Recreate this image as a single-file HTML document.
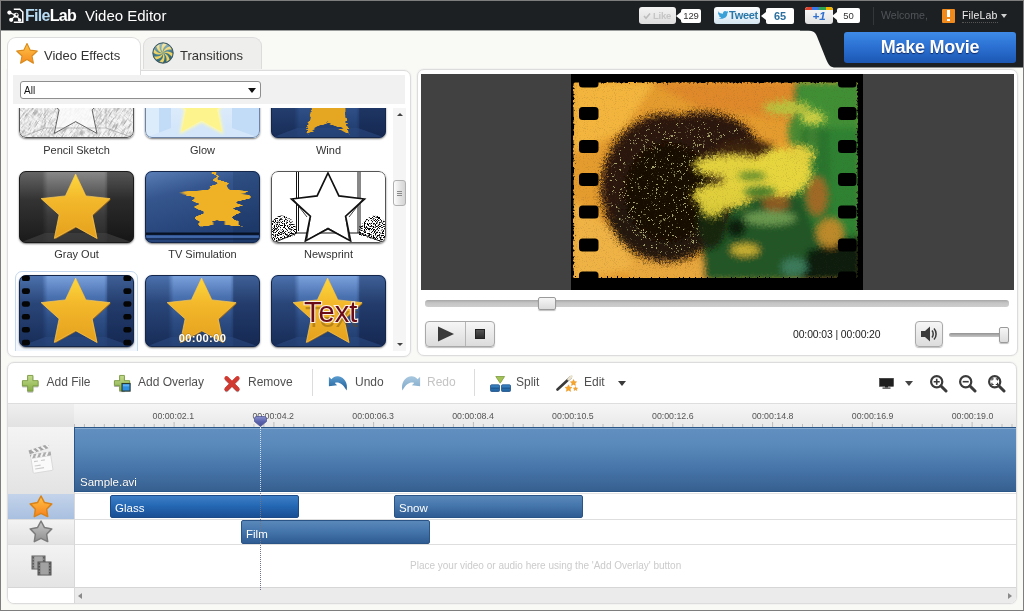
<!DOCTYPE html>
<html lang="en">
<head>
<meta charset="utf-8">
<title>FileLab Video Editor</title>
<style>
*{box-sizing:border-box;margin:0;padding:0}
html,body{width:1024px;height:611px;overflow:hidden}
body{position:relative;background:#f9f9f6;font-family:"Liberation Sans",Arial,sans-serif;font-size:12px;color:#3a3a3a}
.abs{position:absolute}
#root{position:absolute;left:0;top:0;width:1024px;height:611px;will-change:transform}
#frame{position:absolute;left:0;top:0;width:1024px;height:611px;border:1px solid #7e7e7e;z-index:50;pointer-events:none}
/* header */
#hdr{position:absolute;left:0;top:0;width:1024px;height:31px;background:#1d2023;border-bottom:1px solid #9b9c9c}
#hdrx{position:absolute;left:800px;top:30px;width:224px;height:38px}
#logo{position:absolute;left:25px;top:6px;font-size:16px;font-weight:bold;letter-spacing:-0.7px;color:#fff;line-height:19px}
#logo b{color:#b7dbf3}
#ttl{position:absolute;left:85px;top:6px;font-size:15px;color:#fff;line-height:19px}
.soc{position:absolute;top:7px;height:17px;border-radius:3px;font-size:10px;line-height:17px;text-align:center}
.cnt{position:absolute;top:7px;height:17px;background:#fff;border-radius:2px;font-size:10px;line-height:17px;text-align:center;color:#333}
#mk{position:absolute;left:844px;top:32px;width:172px;height:31px;border-radius:3px;background:linear-gradient(#3e8ae6,#2c72d4 45%,#1c57b3);color:#fff;font-weight:bold;font-size:18px;line-height:30px;text-align:center;text-shadow:0 1px 1px rgba(0,0,40,.6);letter-spacing:-0.25px}
/* tabs */
.tab{position:absolute;top:37px;height:36px;border:1px solid #dcdcdc;border-bottom:none;border-radius:9px 9px 0 0;font-size:13px;line-height:36px;color:#333}
#tab1{left:7px;width:134px;background:#fff;height:38px;z-index:3}
#tab2{left:143px;width:119px;background:#eeeeec}
.panel{position:absolute;background:#fff;border:1px solid #dcdcdc;border-radius:7px;box-shadow:0 0 0 1px #f3f3f1}
#fx{left:7px;top:70px;width:404px;height:287px;border-top-left-radius:0}
#fbar{position:absolute;left:13px;top:75px;width:392px;height:29px;background:#f1f1f1}
#sel{position:absolute;left:20px;top:81px;width:241px;height:18px;border:1px solid #8e8e8e;border-radius:3px;background:#fff;font-size:10px;line-height:17px;padding-left:3px;color:#111}
#sel:after{content:"";position:absolute;right:4px;top:6px;border:4px solid transparent;border-top:5px solid #111;border-bottom:none}
#tclip{position:absolute;left:8px;top:108px;width:384px;height:243px;overflow:hidden}
.th{position:absolute;width:115px;height:72px;border-radius:7px;overflow:hidden;box-shadow:0 1px 2px rgba(0,0,0,.55)}
.lbl{position:absolute;width:125px;text-align:center;font-size:11px;line-height:14px;color:#333}
/* video */
#vp{left:417px;top:69px;width:601px;height:287px}
#vbg{position:absolute;left:421px;top:74px;width:593px;height:216px;background:#414141}
#vid{position:absolute;left:571px;top:74px;width:292px;height:216px}
.btn{position:absolute;border:1px solid #a9a9a9;background:linear-gradient(#f6f6f6,#dcdcdc);box-shadow:0 1px 1px rgba(0,0,0,.25)}
/* bottom */
#tl{left:7px;top:362px;width:1010px;height:242px;overflow:hidden}
.tb{position:absolute;top:375px;white-space:nowrap;font-size:12px;line-height:15px;color:#505050}
.sep{position:absolute;top:369px;width:1px;height:27px;background:#dcdcdc}
</style>
</head>
<body>
<div id="root">
<div id="hdr"></div>
<svg id="hdrx" viewBox="0 0 224 38"><path d="M0 0H224V37.6H36C30 37.6 28.5 35 26 29L17 6.5C15 2 13 .6 6 .6H0z" fill="#1d2023"/></svg>
<svg class="abs" style="left:7px;top:8px" width="17" height="16" viewBox="0 0 17 16"><path d="M6.8 1.2h6l3 2.800000000000001v10.3h-9" fill="none" stroke="#fff" stroke-width="1.5"/><path d="M2.2 4.6L9.1 7.2 4 11.7M9.1 7.2l3.6 4.8" stroke="#fff" stroke-width="1.2" fill="none"/><circle cx="2.4" cy="4.6" r="2.1" fill="#fff"/><circle cx="9.1" cy="7.2" r="2.5" fill="#fff"/><circle cx="4.2" cy="11.8" r="2.1" fill="#fff"/><circle cx="12.6" cy="12" r="1.8" fill="#fff"/><circle cx="9.6" cy="6.6" r="1.1" fill="#1d2023"/></svg>
<div id="logo"><b>File</b>Lab</div>
<div id="ttl">Video Editor</div>
<div class="soc" style="left:639px;width:37px;background:linear-gradient(#f3f3f3,#dedede);color:#c6c6c6;font-weight:bold;padding-left:9px;letter-spacing:-.3px;font-size:9.5px">Like</div>
<svg class="abs" style="left:643px;top:12px" width="8" height="8" viewBox="0 0 8 8"><path d="M1 4l2 2.3L7 1.5" stroke="#bdbdbd" stroke-width="1.6" fill="none"/></svg>
<div class="cnt" style="left:681px;width:20px;top:9px;height:14px;line-height:14px;font-size:9.5px;letter-spacing:-.2px">129</div>
<div class="abs" style="left:676px;top:12px;border:4px solid transparent;border-right:5px solid #fff;border-left:none"></div>
<div class="soc" style="left:714px;width:46px;background:linear-gradient(#fdfeff,#d5e6f1);color:#2a77a8;font-weight:bold;padding-left:13px;letter-spacing:-.3px;font-size:11px">Tweet</div>
<svg class="abs" style="left:717px;top:10px" width="12" height="10" viewBox="0 0 12 10"><path d="M1 1.2c1.5 1.8 3 2.4 5 2.5C5.800000000000001 1.5 8 .2 9.600000000000001 1.6l1.6-.5-.8 1.2 1 .1-1.100000000000001.900000000000001C10.5 7 7 10 1 8.400000000000001c1.400000000000001 0 2.400000000000001-.3 3.100000000000001-1C2.800000000000001 7.2 2.100000000000001 6.5 1.800000000000001 5.6h1.100000000000001C1.600000000000001 5 1 4 1 3l1 .3C1 2.6.8 1.900000000000001 1 1.2z" fill="#39a0d8"/></svg>
<div class="cnt" style="left:766px;width:28px;top:8px;height:16px;line-height:16px;color:#2a6f9e;font-weight:bold;font-size:11px">65</div>
<div class="abs" style="left:761px;top:12px;border:4px solid transparent;border-right:5px solid #fff;border-left:none"></div>
<div class="soc" style="left:805px;width:28px;background:linear-gradient(#fafafa,#e2e2e2);color:#2f6fd0;font-weight:bold;font-style:italic;font-size:11.5px;overflow:hidden;padding-top:1px">+1<span class="abs" style="left:0;top:0;width:28px;height:3px;background:linear-gradient(90deg,#d9412e 0 25%,#3b78e7 25% 50%,#2ea44f 50% 75%,#f4b400 75%)"></span></div>
<div class="cnt" style="left:837px;width:23px;top:8px;height:15px;line-height:15px;font-size:9.5px">50</div>
<div class="abs" style="left:832px;top:12px;border:4px solid transparent;border-right:5px solid #fff;border-left:none"></div>
<div class="abs" style="left:873px;top:7px;width:1px;height:18px;background:#33373b"></div>
<div class="abs" style="left:881px;top:9px;font-size:10.6px;line-height:13px;color:#505458">Welcome,</div>
<div class="abs" style="left:942px;top:9px;width:13px;height:14px;background:#f08a1d;border-radius:1px"></div>
<div class="abs" style="left:947px;top:10px;width:3px;height:7px;background:#fff"></div><div class="abs" style="left:947px;top:19px;width:3px;height:2px;background:#fff"></div>
<div class="abs" style="left:962px;top:9px;font-size:10.5px;line-height:13px;color:#ececec;letter-spacing:.15px;border-bottom:1px dotted #555">FileLab</div>
<div class="abs" style="left:1001px;top:14px;border:3.5px solid transparent;border-top:4px solid #d0d0d0;border-bottom:none"></div>
<div id="mk">Make Movie</div>
<div class="tab" id="tab2"><span style="position:absolute;left:36px">Transitions</span></div>
<div class="panel" id="fx"></div>
<div class="tab" id="tab1"><span style="position:absolute;left:36px">Video Effects</span></div>
<svg class="abs" style="left:15px;top:42px;z-index:4" width="24" height="23" viewBox="0 0 24 23"><defs><linearGradient id="sg" x1="0" y1="0" x2="0" y2="1"><stop offset="0" stop-color="#ffc64a"/><stop offset="1" stop-color="#f58a1f"/></linearGradient></defs><path d="M12 1.5l3.100000000000001 6.6 7.2.9-5.3 5 1.400000000000001 7.2L12 17.6l-6.4 3.600000000000001L7 14 1.7 9l7.2-.9z" fill="url(#sg)" stroke="#d98a1c" stroke-width="1.1" stroke-linejoin="round"/></svg>
<svg class="abs" style="left:152px;top:42px;z-index:4" width="22" height="22" viewBox="0 0 22 22"><defs><radialGradient id="tg" cx=".4" cy=".3" r=".8"><stop offset="0" stop-color="#5a9aa8"/><stop offset="1" stop-color="#24596a"/></radialGradient><linearGradient id="tgl" x1="0" y1="0" x2="0" y2="1"><stop offset="0" stop-color="#fff" stop-opacity=".45"/><stop offset=".5" stop-color="#fff" stop-opacity="0"/></linearGradient></defs><circle cx="11" cy="11" r="10.2" fill="url(#tg)" stroke="#3c5560" stroke-width="1"/><path d="M11 11Q15.1 7.8 20.4 11.0A9.4 9.4 0 0 1 19.6 14.8Q16.0 9.7 11 11zM11 11Q16.1 11.6 17.6 17.6A9.4 9.4 0 0 1 14.4 19.8Q15.4 13.7 11 11zM11 11Q14.2 15.1 11.0 20.4A9.4 9.4 0 0 1 7.2 19.6Q12.3 16.0 11 11zM11 11Q10.4 16.1 4.4 17.6A9.4 9.4 0 0 1 2.2 14.4Q8.3 15.4 11 11zM11 11Q6.9 14.2 1.6 11.0A9.4 9.4 0 0 1 2.4 7.2Q6.0 12.3 11 11zM11 11Q5.9 10.4 4.4 4.4A9.4 9.4 0 0 1 7.6 2.2Q6.6 8.3 11 11zM11 11Q7.8 6.9 11.0 1.6A9.4 9.4 0 0 1 14.8 2.4Q9.7 6.0 11 11zM11 11Q11.6 5.9 17.6 4.4A9.4 9.4 0 0 1 19.8 7.6Q13.7 6.6 11 11z" fill="#efd264"/><circle cx="11" cy="11" r="9.6" fill="url(#tgl)"/></svg>
<div id="fbar"></div>
<div id="sel">All</div>
<svg width="0" height="0" style="position:absolute"><defs><linearGradient id="sy" x1="0" y1="0" x2="0" y2="1"><stop offset="0" stop-color="#fcd83e"/><stop offset=".4" stop-color="#f3b82b"/><stop offset="1" stop-color="#e5a11d"/></linearGradient></defs></svg>
<div id="tclip">
<div class="abs" style="left:7px;top:163px;width:123px;height:90px;border:1px solid #c3d7ee;border-radius:7px;background:linear-gradient(#ffffff,#f0f6fd)"></div>
<svg class="th" style="left:11px;top:-42px" viewBox="0 0 115 72"><rect width="115" height="72" fill="#f6f6f6"/><filter id="pn" x="0" y="0" width="100%" height="100%"><feTurbulence type="fractalNoise" baseFrequency="0.13 0.85" numOctaves="2" seed="3"/><feColorMatrix values="0 0 0 0 .42 0 0 0 0 .42 0 0 0 0 .42 0 0 0 -3.2 1.75"/></filter><g transform="rotate(-58 57 36)"><rect x="-40" y="-50" width="200" height="180" filter="url(#pn)"/></g><g transform="rotate(40 57 36)" opacity=".45"><rect x="-40" y="-50" width="200" height="180" filter="url(#pn)"/></g><polygon points="56.6,3.0 66.8,24.9 91.1,27.6 73.1,43.8 77.9,67.4 56.6,55.6 35.3,67.4 40.1,43.8 22.1,27.6 46.4,24.9" fill="#fbfbfb" fill-opacity=".85" stroke="#555" stroke-width=".9"/><path d="M26 0v62M87 0v62" stroke="#9a9a9a" stroke-width=".5"/><path d="M26 62L0 72M87 62l28 10M26 62h61" stroke="#8a8a8a" stroke-width=".5"/><rect x=".5" y=".5" width="114" height="71" rx="6.5" fill="none" stroke="#555" stroke-width="1"/></svg>
<svg class="th" style="left:137px;top:-42px" viewBox="0 0 115 72"><defs><linearGradient id="gl" x1="0" y1="0" x2="0" y2="1"><stop offset="0" stop-color="#eef7ff"/><stop offset="1" stop-color="#cfe3f9"/></linearGradient><filter id="gbl"><feGaussianBlur stdDeviation="1.8"/></filter></defs><rect width="115" height="72" fill="#c2dbf6"/><rect width="14" height="72" fill="#e3f0fd" opacity=".8"/><rect x="26" width="61" height="72" fill="url(#gl)"/><path d="M26 62h61l28 10H0z" fill="#d3e6fa"/><polygon points="56.6,2.0 67.4,24.1 92.1,27.3 74.0,44.1 78.5,68.2 56.6,56.5 34.7,68.2 39.2,44.1 21.1,27.3 45.8,24.1" fill="#fff9a8" filter="url(#gbl)"/><polygon points="56.6,5.0 66.2,25.7 89.2,28.2 72.1,43.5 76.8,65.8 56.6,54.6 36.4,65.8 41.1,43.5 24.0,28.2 47.0,25.7" fill="#fdf48e"/><rect x=".5" y=".5" width="114" height="71" rx="6.5" fill="none" stroke="#6d84a6" stroke-width="1"/></svg>
<svg class="th" style="left:263px;top:-42px" viewBox="0 0 115 72"><defs><linearGradient id="bbw" x1="0" y1="0" x2="0" y2="1"><stop offset="0" stop-color="#7da3de"/><stop offset=".3" stop-color="#4b72b0"/><stop offset=".6" stop-color="#2e4f86"/><stop offset="1" stop-color="#1e3869"/></linearGradient><linearGradient id="bsw" x1="0" y1="0" x2="0" y2="1"><stop offset="0" stop-color="#4c72ae"/><stop offset=".4" stop-color="#294578"/><stop offset="1" stop-color="#172c57"/></linearGradient></defs><linearGradient id="hmw" x1="0" y1="0" x2="1" y2="0"><stop offset="0" stop-color="#fff" stop-opacity="0"/><stop offset=".2" stop-color="#fff" stop-opacity="0"/><stop offset=".25" stop-color="#fff"/><stop offset=".74" stop-color="#fff"/><stop offset=".78" stop-color="#fff" stop-opacity="0"/><stop offset="1" stop-color="#fff" stop-opacity="0"/></linearGradient><mask id="mkw"><rect width="115" height="72" fill="url(#hmw)"/></mask><rect width="115" height="72" fill="url(#bsw)"/><rect x="0" y="0" width="115" height="72" fill="url(#bbw)" mask="url(#mkw)"/><rect x="88" y="0" width="27" height="72" fill="#0a1838" opacity=".18"/><path d="M26 62h61l28 10H0z" fill="#2c4a80" opacity=".6"/><rect x=".5" y=".5" width="114" height="71" rx="6.5" fill="none" stroke="#14264a" stroke-width="1"/><filter id="wf" x="-10%" width="120%"><feTurbulence type="fractalNoise" baseFrequency="0.01 0.7" numOctaves="1" seed="2" result="n"/><feDisplacementMap in="SourceGraphic" in2="n" scale="7" xChannelSelector="R" yChannelSelector="A"/></filter><polygon points="56.6,3.0 66.8,24.9 91.1,27.6 73.1,43.8 77.9,67.4 56.6,55.6 35.3,67.4 40.1,43.8 22.1,27.6 46.4,24.9" fill="#e5a624" filter="url(#wf)"/></svg>
<svg class="th" style="left:11px;top:63px" viewBox="0 0 115 72"><defs><linearGradient id="bbg" x1="0" y1="0" x2="0" y2="1"><stop offset="0" stop-color="#8a8a8a"/><stop offset=".3" stop-color="#5c5c5c"/><stop offset=".6" stop-color="#3c3c3c"/><stop offset="1" stop-color="#262626"/></linearGradient><linearGradient id="bsg" x1="0" y1="0" x2="0" y2="1"><stop offset="0" stop-color="#666"/><stop offset=".4" stop-color="#333"/><stop offset="1" stop-color="#1a1a1a"/></linearGradient></defs><linearGradient id="hmg" x1="0" y1="0" x2="1" y2="0"><stop offset="0" stop-color="#fff" stop-opacity="0"/><stop offset=".2" stop-color="#fff" stop-opacity="0"/><stop offset=".25" stop-color="#fff"/><stop offset=".74" stop-color="#fff"/><stop offset=".78" stop-color="#fff" stop-opacity="0"/><stop offset="1" stop-color="#fff" stop-opacity="0"/></linearGradient><mask id="mkg"><rect width="115" height="72" fill="url(#hmg)"/></mask><rect width="115" height="72" fill="url(#bsg)"/><rect x="0" y="0" width="115" height="72" fill="url(#bbg)" mask="url(#mkg)"/><rect x="88" y="0" width="27" height="72" fill="#000" opacity=".15"/><path d="M26 62h61l28 10H0z" fill="#444" opacity=".6"/><rect x=".5" y=".5" width="114" height="71" rx="6.5" fill="none" stroke="#1a1a1a" stroke-width="1"/><polygon points="56.6,3.0 66.8,24.9 91.1,27.6 73.1,43.8 77.9,67.4 56.6,55.6 35.3,67.4 40.1,43.8 22.1,27.6 46.4,24.9" fill="#a66d0c" transform="translate(.8 .9)"/><polygon points="56.6,3.0 66.8,24.9 91.1,27.6 73.1,43.8 77.9,67.4 56.6,55.6 35.3,67.4 40.1,43.8 22.1,27.6 46.4,24.9" fill="url(#sy)" stroke="#f6c95c" stroke-width=".7" stroke-linejoin="round" /></svg>
<svg class="th" style="left:137px;top:63px" viewBox="0 0 115 72"><defs><linearGradient id="tvb" x1="0" y1="0" x2=".4" y2="1"><stop offset="0" stop-color="#5b7fb8"/><stop offset=".35" stop-color="#35568e"/><stop offset="1" stop-color="#223f74"/></linearGradient></defs><rect width="115" height="72" fill="url(#tvb)"/><rect x="88" width="27" height="72" fill="#0a1838" opacity=".15"/><filter id="tvf" x="-25%" width="150%"><feTurbulence type="fractalNoise" baseFrequency="0.002 0.2" numOctaves="1" seed="11" result="n"/><feDisplacementMap in="SourceGraphic" in2="n" scale="24" xChannelSelector="R" yChannelSelector="A"/></filter><polygon points="73.0,0.8 83.9,19.2 106.3,23.0 90.6,38.3 93.6,59.1 73.0,50.0 52.4,59.1 55.4,38.3 39.7,23.0 62.1,19.2" fill="#efb127" filter="url(#tvf)"/><rect y="61.5" width="115" height="2.4" fill="#081225"/><rect y="67.5" width="115" height="1" fill="#0b1630" opacity=".8"/><rect y="64.5" width="115" height="2.4" fill="#4d78bd" opacity=".7"/><rect x=".5" y=".5" width="114" height="71" rx="6.5" fill="none" stroke="#14264a" stroke-width="1"/></svg>
<svg class="th" style="left:263px;top:63px" viewBox="0 0 115 72"><rect width="115" height="72" fill="#fff"/><filter id="nf"><feTurbulence type="fractalNoise" baseFrequency="0.9" numOctaves="2" seed="5"/><feColorMatrix values="0 0 0 0 0 0 0 0 0 0 0 0 0 0 0 0 0 0 -11 5.6"/></filter><clipPath id="nc"><path d="M0 52c4-5 8-9 14-7l6 3 5 8v8l-25 8zM115 52c-4-5-8-9-14-7l-6 3-7 8v8l27 8z"/></clipPath><rect width="115" height="72" filter="url(#nf)" clip-path="url(#nc)"/><path d="M25.5 0v62M27.5 0v60M87 0v62M89 0v60M26 62L2 72M88 62l26 10M26 62h62" stroke="#111" stroke-width="1" fill="none"/><polygon points="57.0,2.0 67.9,24.9 93.5,28.0 74.6,45.2 79.6,70.0 57.0,57.7 34.4,70.0 39.4,45.2 20.5,28.0 46.1,24.9" fill="#fff" stroke="#111" stroke-width="1.7"/><path d="M22 28l14 18M92 28l-14 18M36 68l3-20M78 68l-3-20M38 68l19-11 19 11" fill="none" stroke="#111" stroke-width=".8"/><rect x=".5" y=".5" width="114" height="71" rx="6.5" fill="none" stroke="#555" stroke-width="1"/></svg>
<svg class="th" style="left:11px;top:167px" viewBox="0 0 115 72"><defs><linearGradient id="bbf" x1="0" y1="0" x2="0" y2="1"><stop offset="0" stop-color="#7da3de"/><stop offset=".3" stop-color="#4b72b0"/><stop offset=".6" stop-color="#2e4f86"/><stop offset="1" stop-color="#1e3869"/></linearGradient><linearGradient id="bsf" x1="0" y1="0" x2="0" y2="1"><stop offset="0" stop-color="#4c72ae"/><stop offset=".4" stop-color="#294578"/><stop offset="1" stop-color="#172c57"/></linearGradient></defs><linearGradient id="hmf" x1="0" y1="0" x2="1" y2="0"><stop offset="0" stop-color="#fff" stop-opacity="0"/><stop offset=".2" stop-color="#fff" stop-opacity="0"/><stop offset=".25" stop-color="#fff"/><stop offset=".74" stop-color="#fff"/><stop offset=".78" stop-color="#fff" stop-opacity="0"/><stop offset="1" stop-color="#fff" stop-opacity="0"/></linearGradient><mask id="mkf"><rect width="115" height="72" fill="url(#hmf)"/></mask><rect width="115" height="72" fill="url(#bsf)"/><rect x="0" y="0" width="115" height="72" fill="url(#bbf)" mask="url(#mkf)"/><rect x="88" y="0" width="27" height="72" fill="#0a1838" opacity=".18"/><path d="M26 62h61l28 10H0z" fill="#2c4a80" opacity=".6"/><rect x=".5" y=".5" width="114" height="71" rx="6.5" fill="none" stroke="#14264a" stroke-width="1"/><polygon points="56.6,3.0 66.8,24.9 91.1,27.6 73.1,43.8 77.9,67.4 56.6,55.6 35.3,67.4 40.1,43.8 22.1,27.6 46.4,24.9" fill="#a66d0c" transform="translate(.8 .9)"/><polygon points="56.6,3.0 66.8,24.9 91.1,27.6 73.1,43.8 77.9,67.4 56.6,55.6 35.3,67.4 40.1,43.8 22.1,27.6 46.4,24.9" fill="url(#sy)" stroke="#f6c95c" stroke-width=".7" stroke-linejoin="round" /><rect x="2.9" y="0.5" width="8" height="5.6" rx="2.2" fill="#050505"/><rect x="2.9" y="13.3" width="8" height="5.6" rx="2.2" fill="#050505"/><rect x="2.9" y="26.2" width="8" height="5.6" rx="2.2" fill="#050505"/><rect x="2.9" y="39.0" width="8" height="5.6" rx="2.2" fill="#050505"/><rect x="2.9" y="51.9" width="8" height="5.6" rx="2.2" fill="#050505"/><rect x="2.9" y="64.8" width="8" height="5.6" rx="2.2" fill="#050505"/><rect x="104.4" y="0.5" width="8" height="5.6" rx="2.2" fill="#050505"/><rect x="104.4" y="13.3" width="8" height="5.6" rx="2.2" fill="#050505"/><rect x="104.4" y="26.2" width="8" height="5.6" rx="2.2" fill="#050505"/><rect x="104.4" y="39.0" width="8" height="5.6" rx="2.2" fill="#050505"/><rect x="104.4" y="51.9" width="8" height="5.6" rx="2.2" fill="#050505"/><rect x="104.4" y="64.8" width="8" height="5.6" rx="2.2" fill="#050505"/></svg>
<svg class="th" style="left:137px;top:167px" viewBox="0 0 115 72"><defs><linearGradient id="bbc" x1="0" y1="0" x2="0" y2="1"><stop offset="0" stop-color="#7da3de"/><stop offset=".3" stop-color="#4b72b0"/><stop offset=".6" stop-color="#2e4f86"/><stop offset="1" stop-color="#1e3869"/></linearGradient><linearGradient id="bsc" x1="0" y1="0" x2="0" y2="1"><stop offset="0" stop-color="#4c72ae"/><stop offset=".4" stop-color="#294578"/><stop offset="1" stop-color="#172c57"/></linearGradient></defs><linearGradient id="hmc" x1="0" y1="0" x2="1" y2="0"><stop offset="0" stop-color="#fff" stop-opacity="0"/><stop offset=".2" stop-color="#fff" stop-opacity="0"/><stop offset=".25" stop-color="#fff"/><stop offset=".74" stop-color="#fff"/><stop offset=".78" stop-color="#fff" stop-opacity="0"/><stop offset="1" stop-color="#fff" stop-opacity="0"/></linearGradient><mask id="mkc"><rect width="115" height="72" fill="url(#hmc)"/></mask><rect width="115" height="72" fill="url(#bsc)"/><rect x="0" y="0" width="115" height="72" fill="url(#bbc)" mask="url(#mkc)"/><rect x="88" y="0" width="27" height="72" fill="#0a1838" opacity=".18"/><path d="M26 62h61l28 10H0z" fill="#2c4a80" opacity=".6"/><rect x=".5" y=".5" width="114" height="71" rx="6.5" fill="none" stroke="#14264a" stroke-width="1"/><polygon points="56.6,3.0 66.8,24.9 91.1,27.6 73.1,43.8 77.9,67.4 56.6,55.6 35.3,67.4 40.1,43.8 22.1,27.6 46.4,24.9" fill="#a66d0c" transform="translate(.8 .9)"/><polygon points="56.6,3.0 66.8,24.9 91.1,27.6 73.1,43.8 77.9,67.4 56.6,55.6 35.3,67.4 40.1,43.8 22.1,27.6 46.4,24.9" fill="url(#sy)" stroke="#f6c95c" stroke-width=".7" stroke-linejoin="round" /><text x="57.5" y="67.3" text-anchor="middle" font-family="Liberation Sans,Arial,sans-serif" font-weight="bold" font-size="11.2" letter-spacing=".35" fill="#fff" stroke="#54431c" stroke-opacity=".5" stroke-width=".8" paint-order="stroke">00:00:00</text></svg>
<svg class="th" style="left:263px;top:167px" viewBox="0 0 115 72"><defs><linearGradient id="bbx" x1="0" y1="0" x2="0" y2="1"><stop offset="0" stop-color="#7da3de"/><stop offset=".3" stop-color="#4b72b0"/><stop offset=".6" stop-color="#2e4f86"/><stop offset="1" stop-color="#1e3869"/></linearGradient><linearGradient id="bsx" x1="0" y1="0" x2="0" y2="1"><stop offset="0" stop-color="#4c72ae"/><stop offset=".4" stop-color="#294578"/><stop offset="1" stop-color="#172c57"/></linearGradient></defs><linearGradient id="hmx" x1="0" y1="0" x2="1" y2="0"><stop offset="0" stop-color="#fff" stop-opacity="0"/><stop offset=".2" stop-color="#fff" stop-opacity="0"/><stop offset=".25" stop-color="#fff"/><stop offset=".74" stop-color="#fff"/><stop offset=".78" stop-color="#fff" stop-opacity="0"/><stop offset="1" stop-color="#fff" stop-opacity="0"/></linearGradient><mask id="mkx"><rect width="115" height="72" fill="url(#hmx)"/></mask><rect width="115" height="72" fill="url(#bsx)"/><rect x="0" y="0" width="115" height="72" fill="url(#bbx)" mask="url(#mkx)"/><rect x="88" y="0" width="27" height="72" fill="#0a1838" opacity=".18"/><path d="M26 62h61l28 10H0z" fill="#2c4a80" opacity=".6"/><rect x=".5" y=".5" width="114" height="71" rx="6.5" fill="none" stroke="#14264a" stroke-width="1"/><polygon points="56.6,3.0 66.8,24.9 91.1,27.6 73.1,43.8 77.9,67.4 56.6,55.6 35.3,67.4 40.1,43.8 22.1,27.6 46.4,24.9" fill="#a66d0c" transform="translate(.8 .9)"/><polygon points="56.6,3.0 66.8,24.9 91.1,27.6 73.1,43.8 77.9,67.4 56.6,55.6 35.3,67.4 40.1,43.8 22.1,27.6 46.4,24.9" fill="url(#sy)" stroke="#f6c95c" stroke-width=".7" stroke-linejoin="round" /><text x="59.7" y="46.7" text-anchor="middle" font-family="Liberation Sans,Arial,sans-serif" font-size="29" fill="#6b4a08" opacity=".4" transform="translate(1 5.5)">Text</text><text x="59.7" y="46.7" text-anchor="middle" font-family="Liberation Sans,Arial,sans-serif" font-size="29" fill="#6a0a16" stroke="#fdf0e4" stroke-width="2.2" paint-order="stroke">Text</text></svg>
<div class="lbl" style="left:6px;top:35px">Pencil Sketch</div>
<div class="lbl" style="left:132px;top:35px">Glow</div>
<div class="lbl" style="left:258px;top:35px">Wind</div>
<div class="lbl" style="left:6px;top:139px">Gray Out</div>
<div class="lbl" style="left:132px;top:139px">TV Simulation</div>
<div class="lbl" style="left:258px;top:139px">Newsprint</div>
</div>
<div class="abs" style="left:393px;top:108px;width:13px;height:243px;background:#f5f5f5"></div>
<div class="abs" style="left:393px;top:180px;width:13px;height:26px;border:1px solid #b0b0b0;border-radius:3px;background:linear-gradient(90deg,#fdfdfd,#e2e2e2 60%,#d4d4d4)"></div>
<div class="abs" style="left:397px;top:191px;width:5px;height:1px;background:#8a8a8a;box-shadow:0 2px 0 #8a8a8a,0 4px 0 #8a8a8a"></div>
<div class="abs" style="left:397px;top:113px;border:3px solid transparent;border-bottom:3.5px solid #444;border-top:none"></div>
<div class="abs" style="left:397px;top:343px;border:3px solid transparent;border-top:3.5px solid #444;border-bottom:none"></div>
<div class="panel" id="vp"></div>
<div id="vbg"></div>
<svg id="vid" viewBox="0 0 292 216">
<defs>
<filter id="b3" x="-30%" y="-30%" width="160%" height="160%"><feGaussianBlur stdDeviation="3"/></filter>
<filter id="rough" x="-10%" y="-10%" width="120%" height="120%"><feTurbulence type="fractalNoise" baseFrequency="0.35" numOctaves="2" seed="4" result="n"/><feDisplacementMap in="SourceGraphic" in2="n" scale="10" xChannelSelector="R" yChannelSelector="G"/></filter>
<filter id="rough2" x="-10%" y="-10%" width="120%" height="120%"><feTurbulence type="fractalNoise" baseFrequency="0.5" numOctaves="2" seed="9" result="n"/><feDisplacementMap in="SourceGraphic" in2="n" scale="6" xChannelSelector="R" yChannelSelector="G"/></filter>
<filter id="rough3" x="-10%" y="-10%" width="120%" height="120%"><feTurbulence type="fractalNoise" baseFrequency="0.85" numOctaves="1" seed="14" result="n"/><feDisplacementMap in="SourceGraphic" in2="n" scale="16" xChannelSelector="R" yChannelSelector="G"/></filter>
<filter id="spk" x="0" y="0" width="100%" height="100%"><feTurbulence type="fractalNoise" baseFrequency="0.9" numOctaves="1" seed="21"/><feColorMatrix values="0 0 0 0 .08 0 0 0 0 .06 0 0 0 0 .02 0 0 0 -7 3.1"/></filter>
<filter id="spk2" x="0" y="0" width="100%" height="100%"><feTurbulence type="fractalNoise" baseFrequency="0.75" numOctaves="2" seed="33"/><feColorMatrix values="0 0 0 0 .4 0 0 0 0 .38 0 0 0 0 .16 0 0 0 14 -9.2"/></filter><clipPath id="dcp"><ellipse cx="96" cy="114" rx="58" ry="66"/><ellipse cx="131" cy="76" rx="48" ry="30"/></clipPath><clipPath id="vc"><rect x="2" y="8" width="285" height="196"/></clipPath>
</defs>
<rect width="292" height="216" fill="#000"/>
<g clip-path="url(#vc)"><g filter="url(#rough2)">
<rect x="2" y="8" width="285" height="196" fill="#e59c2e"/>
<g filter="url(#b3)">
<polygon points="2,8 84,8 51,58 2,78" fill="#f3b53c"/>
<polygon points="2,126 41,154 74,194 2,206" fill="#efb244"/>
<polygon points="79,8 229,8 229,48 129,34" fill="#df892a"/>
<polygon points="59,184 149,184 149,206 59,206" fill="#e9a83e"/>
<polygon points="224,8 290,8 290,206 141,206 135,188 164,174 199,164 219,126 231,76 221,38" fill="#2c752d"/>
<polygon points="129,131 229,118 261,206 133,206" fill="#225627"/>
<polygon points="257,8 290,8 290,158 261,158" fill="#2f8230"/>
<polygon points="226,8 290,8 290,54 229,54" fill="#3f8f35"/>
<polygon points="237,176 290,162 290,206 229,206" fill="#0f1f0e"/>
<ellipse cx="205" cy="129" rx="13" ry="9" fill="#8a5a20"/>
<ellipse cx="246" cy="122" rx="10" ry="19" fill="#a06a26"/>
<ellipse cx="259" cy="159" rx="13" ry="14" fill="#bc8a2c"/>
<ellipse cx="199" cy="144" rx="26" ry="7" fill="#6a9a50"/>
<ellipse cx="223" cy="193" rx="13" ry="9" fill="#3a7a5a"/>
<ellipse cx="165" cy="154" rx="10" ry="10" fill="#0f1a0a"/>
<ellipse cx="174" cy="176" rx="14" ry="6" fill="#c9b030"/>
<ellipse cx="224" cy="57" rx="7" ry="17" fill="#4a8a30"/>
<ellipse cx="241" cy="66" rx="5" ry="14" fill="#3f8230"/>
</g>
<g filter="url(#rough3)"><g filter="url(#b3)">
<ellipse cx="96" cy="114" rx="66" ry="74" fill="#2b1809"/>
<ellipse cx="131" cy="76" rx="56" ry="38" fill="#2c190a"/>
<ellipse cx="94" cy="148" rx="52" ry="36" fill="#23130a"/>
<ellipse cx="97" cy="118" rx="44" ry="50" fill="#170d06"/>
</g></g>
<g clip-path="url(#dcp)"><rect x="20" y="30" width="180" height="170" filter="url(#spk2)"/></g>
<g filter="url(#b3)"><ellipse cx="141" cy="148" rx="14" ry="26" fill="#12260f"/><ellipse cx="174" cy="76" rx="30" ry="10" fill="#3a2109"/></g>
<g filter="url(#rough)"><g filter="url(#b3)" fill="#e3d23c">
<ellipse cx="162" cy="92" rx="40" ry="12" fill="#e3d23c"/>
<ellipse cx="211" cy="98" rx="30" ry="24" fill="#e6d53e"/>
<ellipse cx="230" cy="81" rx="14" ry="9" fill="#e3d23c"/>
<ellipse cx="151" cy="122" rx="30" ry="13" fill="#e0cf3a"/>
<ellipse cx="141" cy="136" rx="12" ry="7" fill="#d7c838"/>
<ellipse cx="177" cy="108" rx="26" ry="10" fill="#e3d23c"/>
<ellipse cx="216" cy="34" rx="24" ry="7" fill="#b9c23e"/>
<ellipse cx="242" cy="44" rx="12" ry="7" fill="#cfd044"/>
</g></g>
<g filter="url(#b3)"><ellipse cx="181" cy="102" rx="14" ry="4" fill="#5d8a2c"/><ellipse cx="189" cy="118" rx="16" ry="5" fill="#3e7a2a"/></g>
</g>
<rect x="2" y="8" width="285" height="196" filter="url(#spk)" opacity=".12"/></g>
<g filter="url(#rough2)"><rect x="0" y="0" width="292" height="8.5" fill="#000"/><rect x="0" y="204" width="292" height="12" fill="#000"/><rect x="0" y="0" width="2.5" height="216" fill="#000"/><rect x="286.5" y="0" width="5.5" height="216" fill="#000"/></g>
<rect x="8" y="0.5" width="19.5" height="13" rx="3.5" fill="#000"/><rect x="8" y="32.9" width="19.5" height="13" rx="3.5" fill="#000"/><rect x="8" y="66.0" width="19.5" height="13" rx="3.5" fill="#000"/><rect x="8" y="98.9" width="19.5" height="13" rx="3.5" fill="#000"/><rect x="8" y="131.5" width="19.5" height="13" rx="3.5" fill="#000"/><rect x="8" y="164.5" width="19.5" height="13" rx="3.5" fill="#000"/><rect x="8" y="197.5" width="19.5" height="13" rx="3.5" fill="#000"/><rect x="267" y="0.5" width="18.5" height="13" rx="3.5" fill="#000"/><rect x="267" y="32.9" width="18.5" height="13" rx="3.5" fill="#000"/><rect x="267" y="66.0" width="18.5" height="13" rx="3.5" fill="#000"/><rect x="267" y="98.9" width="18.5" height="13" rx="3.5" fill="#000"/><rect x="267" y="131.5" width="18.5" height="13" rx="3.5" fill="#000"/><rect x="267" y="164.5" width="18.5" height="13" rx="3.5" fill="#000"/><rect x="267" y="197.5" width="18.5" height="13" rx="3.5" fill="#000"/>
</svg>
<div class="abs" style="left:425px;top:300px;width:584px;height:7px;border-radius:3px;background:linear-gradient(#a6a6a6,#c4c4c4 40%,#cecece)"></div>
<div class="btn" style="left:538px;top:297px;width:18px;height:13px;border-radius:2px;border-color:#9a9a9a"></div>
<div class="btn" style="left:425px;top:321px;width:70px;height:26px;border-radius:4px"></div>
<div class="abs" style="left:465px;top:322px;width:1px;height:24px;background:#b5b5b5"></div>
<svg class="abs" style="left:437px;top:326px" width="18" height="16" viewBox="0 0 18 16"><path d="M1 .5L17 8 1 15.5z" fill="#3a3a3a"/></svg>
<div class="abs" style="left:475px;top:329px;width:10px;height:10px;background:linear-gradient(#555,#2c2c2c);border:1px solid #222"></div>
<div class="abs" style="left:793px;top:328px;font-size:10.4px;line-height:14px;color:#222;letter-spacing:-.1px">00:00:03 | 00:00:20</div>
<div class="btn" style="left:915px;top:321px;width:28px;height:26px;border-radius:4px"></div>
<svg class="abs" style="left:920px;top:326px" width="18" height="16" viewBox="0 0 18 16"><path d="M1 5h4l5-4.5v15L5 11H1z" fill="#3a3a3a"/><path d="M12 4.5c1.6 1.8 1.6 5.2 0 7M14 2.5c2.800000000000001 3 2.800000000000001 8 0 11" stroke="#3a3a3a" stroke-width="1.5" fill="none"/></svg>
<div class="abs" style="left:949px;top:333px;width:55px;height:4px;border-radius:2px;background:linear-gradient(#939393,#c6c6c6)"></div>
<div class="btn" style="left:999px;top:327px;width:10px;height:16px;border-radius:2px;border-color:#9a9a9a"></div>
<div id="tbar" style="position:absolute;left:0;top:0;z-index:5">
<svg width="0" height="0" style="position:absolute"><defs>
<linearGradient id="gp" x1="0" y1="0" x2="0" y2="1"><stop offset="0" stop-color="#c4dc8e"/><stop offset="1" stop-color="#86ad45"/></linearGradient>
<linearGradient id="gr" x1="0" y1="0" x2="0" y2="1"><stop offset="0" stop-color="#e2483b"/><stop offset="1" stop-color="#a81c1c"/></linearGradient>
<linearGradient id="gb" x1="0" y1="0" x2="0" y2="1"><stop offset="0" stop-color="#5a9bd0"/><stop offset="1" stop-color="#1f5f96"/></linearGradient>
<linearGradient id="gb2" x1="0" y1="0" x2="0" y2="1"><stop offset="0" stop-color="#a9c8e0"/><stop offset="1" stop-color="#7fa9c9"/></linearGradient>
<linearGradient id="gs2" x1="0" y1="0" x2="0" y2="1"><stop offset="0" stop-color="#3d86c6"/><stop offset="1" stop-color="#1f5f9c"/></linearGradient>
<filter id="ds" x="-20%" y="-20%" width="140%" height="150%"><feGaussianBlur in="SourceAlpha" stdDeviation=".7"/><feOffset dy="1"/><feComponentTransfer><feFuncA type="linear" slope=".35"/></feComponentTransfer><feMerge><feMergeNode/><feMergeNode in="SourceGraphic"/></feMerge></filter>
</defs></svg>
<svg class="abs" style="left:21px;top:374px" width="19" height="19" viewBox="0 0 20 20"><path d="M7 1.5h5.5v5.5H18v5.5h-5.5V18H7v-5.5H1.5V7H7z" fill="url(#gp)" stroke="#7c9d45" stroke-width="1" stroke-linejoin="round" filter="url(#ds)"/></svg>
<div class="tb" style="left:46.5px">Add File</div>
<svg class="abs" style="left:113px;top:374px" width="19" height="19" viewBox="0 0 20 20"><path d="M7 1.5h5v5.5H17.5v5h-5.5V17.500000000000004H7v-5.5H1.5V7H7z" fill="url(#gp)" stroke="#7c9d45" stroke-width="1" stroke-linejoin="round" filter="url(#ds)"/><rect x="9.5" y="10" width="8.5" height="8" fill="#2f8fe3" stroke="#2b3b2e" stroke-width="1.2"/><rect x="10.5" y="11" width="6.5" height="2" fill="#5db0f3"/></svg>
<div class="tb" style="left:138px">Add Overlay</div>
<svg class="abs" style="left:223px;top:375px" width="18" height="18" viewBox="0 0 18 18"><path d="M3.5 3.200000000000001L14.5 14.2M14.5 3.200000000000001L3.5 14.2" stroke="url(#gr)" stroke-width="4" stroke-linecap="round" filter="url(#ds)"/><path d="M3.5 3.200000000000001L14.5 14.2M14.5 3.200000000000001L3.5 14.2" stroke="#d13a30" stroke-width="3.800000000000001" stroke-linecap="round" fill="none"/></svg>
<div class="tb" style="left:248px">Remove</div>
<div class="sep" style="left:312px"></div>
<svg class="abs" style="left:328px;top:375px" width="21" height="17" viewBox="0 0 21 17"><path d="M.9 1.8V11.3L9.1 10.2 6.8 7.9C10 6.6 14.5 8 18.6 15.4 20.2 8.5 16.5 2.2 10 1.3 7.6 1 5.2 2 3.4 4.3z" fill="url(#gb)"/></svg>
<div class="tb" style="left:355px">Undo</div>
<svg class="abs" style="left:400px;top:375px" width="21" height="17" viewBox="0 0 21 17"><g transform="translate(21 0) scale(-1 1)"><path d="M.9 1.8V11.3L9.1 10.2 6.8 7.9C10 6.6 14.5 8 18.6 15.4 20.2 8.5 16.5 2.2 10 1.3 7.6 1 5.2 2 3.4 4.3z" fill="url(#gb2)"/></g></svg>
<div class="tb" style="left:427px;color:#c4c4c4">Redo</div>
<div class="sep" style="left:474px"></div>
<svg class="abs" style="left:490px;top:376px" width="21" height="16" viewBox="0 0 21 16"><path d="M5.8 .5h8.8L10.2 7.2z" fill="#a3c255" stroke="#7e9a3e" stroke-width=".8"/><rect x=".5" y="8.8" width="9" height="6.7" rx="1" fill="url(#gs2)" stroke="#1d5288" stroke-width=".8"/><rect x="11.5" y="8.8" width="9" height="6.7" rx="1" fill="url(#gs2)" stroke="#1d5288" stroke-width=".8"/><path d="M1 12.2h8.2M12 12.2h8.2" stroke="#17497c" stroke-width=".8"/></svg>
<div class="tb" style="left:516px">Split</div>
<svg class="abs" style="left:556px;top:374px" width="23" height="19" viewBox="0 0 23 19"><path d="M1.5 15.5L14.5 3.5" stroke="#3a3a3a" stroke-width="2.6" stroke-linecap="round"/><path d="M12.5 5.3L15.5 2.5" stroke="#e9e2cf" stroke-width="2.6" stroke-linecap="round"/><g fill="#f5a52b" stroke="#e38d1d" stroke-width=".4"><path d="M17.5 5.5l1 2 2.200000000000001.3-1.6 1.5.4 2.200000000000001-2-1.1-2 1.1.4-2.200000000000001-1.6-1.5 2.200000000000001-.3z"/><path d="M12.5 10.8l1.1 2.200000000000001 2.400000000000001.3-1.800000000000001 1.700000000000001.5 2.400000000000001-2.200000000000001-1.2-2.200000000000001 1.2.5-2.400000000000001-1.800000000000001-1.700000000000001 2.400000000000001-.3z"/><path d="M19.5 12.5l.7000000000000001 1.400000000000001 1.5.2-1.1 1 .3 1.5-1.400000000000001-.8-1.400000000000001.8.3-1.500000000000001-1.100000000000001-1 1.5-.2z"/></g></svg>
<div class="tb" style="left:584px">Edit</div>
<div class="abs" style="left:618px;top:381px;border:4px solid transparent;border-top:5px solid #3a3a3a;border-bottom:none"></div>
<svg class="abs" style="left:879px;top:378px" width="15" height="11" viewBox="0 0 15 11"><rect x=".5" y=".3" width="14" height="8" fill="#1f1f1f" stroke="#3a3a3a" stroke-width=".6"/><rect x="6" y="8" width="3" height="1.5" fill="#222"/><rect x="3.5" y="9.5" width="8" height="1.2" fill="#333"/></svg>
<div class="abs" style="left:905px;top:381px;border:4px solid transparent;border-top:5px solid #444;border-bottom:none"></div>
<svg class="abs" style="left:929px;top:374px" width="19" height="19" viewBox="0 0 19 19"><circle cx="7.7" cy="7.7" r="5.6" fill="#fff" stroke="#3a3a3a" stroke-width="2.200000000000001"/><path d="M12 12l5 5" stroke="#3a3a3a" stroke-width="3" stroke-linecap="round"/><path d="M4.7 7.7h6M7.7 4.7v6" stroke="#3a3a3a" stroke-width="1.6"/></svg>
<svg class="abs" style="left:958px;top:374px" width="19" height="19" viewBox="0 0 19 19"><circle cx="7.7" cy="7.7" r="5.6" fill="#fff" stroke="#3a3a3a" stroke-width="2.200000000000001"/><path d="M12 12l5 5" stroke="#3a3a3a" stroke-width="3" stroke-linecap="round"/><path d="M4.7 7.7h6" stroke="#3a3a3a" stroke-width="1.6"/></svg>
<svg class="abs" style="left:987px;top:374px" width="19" height="19" viewBox="0 0 19 19"><circle cx="7.7" cy="7.7" r="5.6" fill="#fff" stroke="#3a3a3a" stroke-width="2.200000000000001"/><path d="M12 12l5 5" stroke="#3a3a3a" stroke-width="3" stroke-linecap="round"/><path d="M4.9 6.6V4.9h1.7M8.8 4.9h1.7v1.7M10.5 8.8v1.7H8.8M6.6 10.5H4.9V8.8" stroke="#3a3a3a" stroke-width="1.1" fill="none"/></svg>
</div>
<div class="panel" id="tl"><div id="tlin" style="position:absolute;left:0;top:1px;width:1008px;height:240px">
<div class="abs" style="left:0;top:39px;width:1008px;height:1px;background:#dedede"></div>
<div class="abs" style="left:0;top:40px;width:1008px;height:23px;background:linear-gradient(#f6f6f6,#e9e9e9)"></div>
<div class="abs" style="left:0;top:40px;width:66px;height:23px;background:linear-gradient(#efefef,#e2e2e2)"></div>
<div class="abs" style="left:0;top:63px;width:66px;height:67px;background:linear-gradient(#f4f4f4,#e3e3e3)"></div>
<div class="abs" style="left:0;top:156px;width:66px;height:25px;background:linear-gradient(#f3f3f3,#e2e2e2)"></div>
<div class="abs" style="left:0;top:181px;width:66px;height:43px;background:linear-gradient(#f3f3f3,#e4e4e4)"></div>
<div class="abs" style="left:66px;top:63px;width:942px;height:161px;background:#fff"></div>
<div class="abs" style="left:0;top:130px;width:66px;height:25px;background:linear-gradient(#c3d3ea,#a9c0e0)"></div>
<div class="abs" style="left:0;top:129px;width:1008px;height:1px;background:#e3e3e3"></div>
<div class="abs" style="left:0;top:155px;width:1008px;height:1px;background:#dedede"></div>
<div class="abs" style="left:0;top:180px;width:1008px;height:1px;background:#dedede"></div>
<div class="abs" style="left:0;top:223px;width:1008px;height:1px;background:#d6d6d6"></div>
<div class="abs" style="left:66px;top:224px;width:942px;height:16px;background:#ebebeb"></div>
<div class="abs" style="left:0px;top:224px;width:66px;height:16px;background:#fff"></div>
<div class="abs" style="left:66px;top:63px;width:1px;height:177px;background:#d8d8d8"></div>
<div class="abs" style="left:66px;top:63px;width:943px;height:65px;background:linear-gradient(#628fc0,#5888ba 30%,#4471a6 70%,#36608f);border:1px solid #2a5587;border-right-color:#24507f;box-shadow:inset 0 1px 0 rgba(255,255,255,.25)"></div>
<div class="abs" style="left:72px;top:111px;font-size:11.5px;line-height:14px;color:#fff;text-shadow:0 0 1px rgba(0,0,0,.4)">Sample.avi</div>
<div class="abs clip" style="left:102px;top:131px;width:189px;height:23px;background:linear-gradient(#3f7fc6,#2568b4 45%,#1a4f94);border:1px solid #1c4a86;border-radius:2px"></div>
<div class="abs" style="left:107px;top:137px;font-size:11.5px;line-height:14px;color:#fff">Glass</div>
<div class="abs clip" style="left:386px;top:131px;width:189px;height:23px;background:linear-gradient(#5a88ba,#4576ac 45%,#2f5c92);border:1px solid #2b5486;border-radius:2px"></div>
<div class="abs" style="left:391px;top:137px;font-size:11.5px;line-height:14px;color:#fff">Snow</div>
<div class="abs clip" style="left:233px;top:156px;width:189px;height:24px;background:linear-gradient(#5a88ba,#4576ac 45%,#2f5c92);border:1px solid #2b5486;border-radius:2px"></div>
<div class="abs" style="left:238px;top:163px;font-size:11.5px;line-height:14px;color:#fff">Film</div>
<div class="abs" style="left:402px;top:196px;font-size:10px;line-height:12px;color:#cbcbcb;white-space:nowrap">Place your video or audio here using the 'Add Overlay' button</div>
<svg class="abs" style="left:66px;top:40px" width="942" height="24" viewBox="0 0 942 24">
<rect x="0.0" y="20" width="1" height="3" fill="#bcbcbc"/>
<rect x="9.9" y="20" width="1" height="3" fill="#bcbcbc"/>
<rect x="19.8" y="20" width="1" height="3" fill="#bcbcbc"/>
<rect x="29.8" y="20" width="1" height="3" fill="#bcbcbc"/>
<rect x="39.8" y="20" width="1" height="3" fill="#bcbcbc"/>
<rect x="49.8" y="20" width="1" height="3" fill="#bcbcbc"/>
<rect x="59.7" y="20" width="1" height="3" fill="#bcbcbc"/>
<rect x="69.7" y="20" width="1" height="3" fill="#bcbcbc"/>
<rect x="79.7" y="20" width="1" height="3" fill="#bcbcbc"/>
<rect x="89.7" y="20" width="1" height="3" fill="#bcbcbc"/>
<rect x="99.6" y="18" width="1" height="5" fill="#bcbcbc"/>
<rect x="109.6" y="20" width="1" height="3" fill="#bcbcbc"/>
<rect x="119.6" y="20" width="1" height="3" fill="#bcbcbc"/>
<rect x="129.6" y="20" width="1" height="3" fill="#bcbcbc"/>
<rect x="139.5" y="20" width="1" height="3" fill="#bcbcbc"/>
<rect x="149.5" y="20" width="1" height="3" fill="#bcbcbc"/>
<rect x="159.5" y="20" width="1" height="3" fill="#bcbcbc"/>
<rect x="169.5" y="20" width="1" height="3" fill="#bcbcbc"/>
<rect x="179.4" y="20" width="1" height="3" fill="#bcbcbc"/>
<rect x="189.4" y="20" width="1" height="3" fill="#bcbcbc"/>
<rect x="199.4" y="18" width="1" height="5" fill="#bcbcbc"/>
<rect x="209.4" y="20" width="1" height="3" fill="#bcbcbc"/>
<rect x="219.3" y="20" width="1" height="3" fill="#bcbcbc"/>
<rect x="229.3" y="20" width="1" height="3" fill="#bcbcbc"/>
<rect x="239.3" y="20" width="1" height="3" fill="#bcbcbc"/>
<rect x="249.2" y="20" width="1" height="3" fill="#bcbcbc"/>
<rect x="259.2" y="20" width="1" height="3" fill="#bcbcbc"/>
<rect x="269.2" y="20" width="1" height="3" fill="#bcbcbc"/>
<rect x="279.2" y="20" width="1" height="3" fill="#bcbcbc"/>
<rect x="289.1" y="20" width="1" height="3" fill="#bcbcbc"/>
<rect x="299.1" y="18" width="1" height="5" fill="#bcbcbc"/>
<rect x="309.1" y="20" width="1" height="3" fill="#bcbcbc"/>
<rect x="319.1" y="20" width="1" height="3" fill="#bcbcbc"/>
<rect x="329.0" y="20" width="1" height="3" fill="#bcbcbc"/>
<rect x="339.0" y="20" width="1" height="3" fill="#bcbcbc"/>
<rect x="349.0" y="20" width="1" height="3" fill="#bcbcbc"/>
<rect x="359.0" y="20" width="1" height="3" fill="#bcbcbc"/>
<rect x="368.9" y="20" width="1" height="3" fill="#bcbcbc"/>
<rect x="378.9" y="20" width="1" height="3" fill="#bcbcbc"/>
<rect x="388.9" y="20" width="1" height="3" fill="#bcbcbc"/>
<rect x="398.9" y="18" width="1" height="5" fill="#bcbcbc"/>
<rect x="408.8" y="20" width="1" height="3" fill="#bcbcbc"/>
<rect x="418.8" y="20" width="1" height="3" fill="#bcbcbc"/>
<rect x="428.8" y="20" width="1" height="3" fill="#bcbcbc"/>
<rect x="438.8" y="20" width="1" height="3" fill="#bcbcbc"/>
<rect x="448.7" y="20" width="1" height="3" fill="#bcbcbc"/>
<rect x="458.7" y="20" width="1" height="3" fill="#bcbcbc"/>
<rect x="468.7" y="20" width="1" height="3" fill="#bcbcbc"/>
<rect x="478.7" y="20" width="1" height="3" fill="#bcbcbc"/>
<rect x="488.6" y="20" width="1" height="3" fill="#bcbcbc"/>
<rect x="498.6" y="18" width="1" height="5" fill="#bcbcbc"/>
<rect x="508.6" y="20" width="1" height="3" fill="#bcbcbc"/>
<rect x="518.5" y="20" width="1" height="3" fill="#bcbcbc"/>
<rect x="528.5" y="20" width="1" height="3" fill="#bcbcbc"/>
<rect x="538.5" y="20" width="1" height="3" fill="#bcbcbc"/>
<rect x="548.5" y="20" width="1" height="3" fill="#bcbcbc"/>
<rect x="558.4" y="20" width="1" height="3" fill="#bcbcbc"/>
<rect x="568.4" y="20" width="1" height="3" fill="#bcbcbc"/>
<rect x="578.4" y="20" width="1" height="3" fill="#bcbcbc"/>
<rect x="588.4" y="20" width="1" height="3" fill="#bcbcbc"/>
<rect x="598.3" y="18" width="1" height="5" fill="#bcbcbc"/>
<rect x="608.3" y="20" width="1" height="3" fill="#bcbcbc"/>
<rect x="618.3" y="20" width="1" height="3" fill="#bcbcbc"/>
<rect x="628.3" y="20" width="1" height="3" fill="#bcbcbc"/>
<rect x="638.2" y="20" width="1" height="3" fill="#bcbcbc"/>
<rect x="648.2" y="20" width="1" height="3" fill="#bcbcbc"/>
<rect x="658.2" y="20" width="1" height="3" fill="#bcbcbc"/>
<rect x="668.2" y="20" width="1" height="3" fill="#bcbcbc"/>
<rect x="678.1" y="20" width="1" height="3" fill="#bcbcbc"/>
<rect x="688.1" y="20" width="1" height="3" fill="#bcbcbc"/>
<rect x="698.1" y="18" width="1" height="5" fill="#bcbcbc"/>
<rect x="708.1" y="20" width="1" height="3" fill="#bcbcbc"/>
<rect x="718.0" y="20" width="1" height="3" fill="#bcbcbc"/>
<rect x="728.0" y="20" width="1" height="3" fill="#bcbcbc"/>
<rect x="738.0" y="20" width="1" height="3" fill="#bcbcbc"/>
<rect x="748.0" y="20" width="1" height="3" fill="#bcbcbc"/>
<rect x="757.9" y="20" width="1" height="3" fill="#bcbcbc"/>
<rect x="767.9" y="20" width="1" height="3" fill="#bcbcbc"/>
<rect x="777.9" y="20" width="1" height="3" fill="#bcbcbc"/>
<rect x="787.8" y="20" width="1" height="3" fill="#bcbcbc"/>
<rect x="797.8" y="18" width="1" height="5" fill="#bcbcbc"/>
<rect x="807.8" y="20" width="1" height="3" fill="#bcbcbc"/>
<rect x="817.8" y="20" width="1" height="3" fill="#bcbcbc"/>
<rect x="827.7" y="20" width="1" height="3" fill="#bcbcbc"/>
<rect x="837.7" y="20" width="1" height="3" fill="#bcbcbc"/>
<rect x="847.7" y="20" width="1" height="3" fill="#bcbcbc"/>
<rect x="857.7" y="20" width="1" height="3" fill="#bcbcbc"/>
<rect x="867.6" y="20" width="1" height="3" fill="#bcbcbc"/>
<rect x="877.6" y="20" width="1" height="3" fill="#bcbcbc"/>
<rect x="887.6" y="20" width="1" height="3" fill="#bcbcbc"/>
<rect x="897.6" y="18" width="1" height="5" fill="#bcbcbc"/>
<rect x="907.5" y="20" width="1" height="3" fill="#bcbcbc"/>
<rect x="917.5" y="20" width="1" height="3" fill="#bcbcbc"/>
<rect x="927.5" y="20" width="1" height="3" fill="#bcbcbc"/>
<rect x="937.5" y="20" width="1" height="3" fill="#bcbcbc"/>
<text x="99.3" y="14.6" text-anchor="middle" font-size="8.8" fill="#555" font-family="Liberation Sans,Arial,sans-serif">00:00:02.1</text>
<text x="199.2" y="14.6" text-anchor="middle" font-size="8.8" fill="#555" font-family="Liberation Sans,Arial,sans-serif">00:00:04.2</text>
<text x="299.1" y="14.6" text-anchor="middle" font-size="8.8" fill="#555" font-family="Liberation Sans,Arial,sans-serif">00:00:06.3</text>
<text x="399.0" y="14.6" text-anchor="middle" font-size="8.8" fill="#555" font-family="Liberation Sans,Arial,sans-serif">00:00:08.4</text>
<text x="498.9" y="14.6" text-anchor="middle" font-size="8.8" fill="#555" font-family="Liberation Sans,Arial,sans-serif">00:00:10.5</text>
<text x="598.8" y="14.6" text-anchor="middle" font-size="8.8" fill="#555" font-family="Liberation Sans,Arial,sans-serif">00:00:12.6</text>
<text x="698.7" y="14.6" text-anchor="middle" font-size="8.8" fill="#555" font-family="Liberation Sans,Arial,sans-serif">00:00:14.8</text>
<text x="798.6" y="14.6" text-anchor="middle" font-size="8.8" fill="#555" font-family="Liberation Sans,Arial,sans-serif">00:00:16.9</text>
<text x="898.5" y="14.6" text-anchor="middle" font-size="8.8" fill="#555" font-family="Liberation Sans,Arial,sans-serif">00:00:19.0</text>
</svg>
<div class="abs" style="left:252px;top:63px;width:0;height:66px;border-left:1px dotted rgba(235,240,250,.85)"></div><div class="abs" style="left:252px;top:129px;width:0;height:97px;border-left:1px dotted #707488"></div>
<svg class="abs" style="left:246px;top:52px" width="13" height="11" viewBox="0 0 13 11"><defs><linearGradient id="phg" x1="0" y1="0" x2="0" y2="1"><stop offset="0" stop-color="#8a92cf"/><stop offset=".5" stop-color="#5b64ad"/><stop offset="1" stop-color="#4a5196"/></linearGradient></defs><path d="M2.5 .5h8a2 2 0 0 1 2 2V5.5L6.5 10.5 .5 5.5V2.5a2 2 0 0 1 2-2z" fill="url(#phg)" stroke="#474f8e" stroke-width=".7"/></svg>
<div class="abs" style="left:70px;top:229px;border:3.5px solid transparent;border-right:4px solid #8a8a8a;border-left:none"></div>
<div class="abs" style="left:1000px;top:229px;border:3.5px solid transparent;border-left:4px solid #8a8a8a;border-right:none"></div>
</div></div>
<div id="lc" style="position:absolute;left:0;top:0;z-index:6">
<svg class="abs" style="left:28px;top:445px" width="27" height="30" viewBox="0 0 27 30"><g transform="rotate(-9 13 16)" opacity=".9"><rect x="3.5" y="12" width="20" height="15" rx="1" fill="#fcfcfc" stroke="#d2d2d2" stroke-width=".8"/><rect x="3" y="8" width="21" height="4" fill="#a6a6a6"/><path d="M6 8l-2.500000000000001 4M11 8l-2.500000000000001 4M16 8l-2.500000000000001 4M21 8l-2.500000000000001 4" stroke="#f4f4f4" stroke-width="2"/><g transform="rotate(-9 3 8)"><rect x="3" y="3.5" width="21" height="4" fill="#9c9c9c"/><path d="M6.5 3.5l2.500000000000001 4M11.5 3.5l2.500000000000001 4M16.5 3.5l2.500000000000001 4M21.5 3.5l2.500000000000001 4" stroke="#f4f4f4" stroke-width="2"/></g><path d="M6 15.500000000000002h4M13 15.500000000000002h4M6 20h6M6 23h9" stroke="#c9c9c9" stroke-width="1.1"/></g></svg>
<svg class="abs" style="left:28px;top:494px" width="26" height="25" viewBox="0 0 26 25"><defs><linearGradient id="so" x1="0" y1="0" x2="0" y2="1"><stop offset="0" stop-color="#ffc446"/><stop offset="1" stop-color="#f7811e"/></linearGradient><linearGradient id="sgy" x1="0" y1="0" x2="0" y2="1"><stop offset="0" stop-color="#c9c9c9"/><stop offset="1" stop-color="#8f8f8f"/></linearGradient></defs><polygon points="13.0,2.0 16.5,8.6 23.8,9.9 18.6,15.2 19.7,22.6 13.0,19.3 6.3,22.6 7.4,15.2 2.2,9.9 9.5,8.6" fill="url(#so)" stroke="#d9831a" stroke-width="1.5" stroke-linejoin="round"/></svg>
<svg class="abs" style="left:28px;top:519px" width="26" height="25" viewBox="0 0 26 25"><polygon points="13.0,2.0 16.5,8.6 23.8,9.9 18.6,15.2 19.7,22.6 13.0,19.3 6.3,22.6 7.4,15.2 2.2,9.9 9.5,8.6" fill="url(#sgy)" stroke="#7c7c7c" stroke-width="1.5" stroke-linejoin="round"/></svg>
<svg class="abs" style="left:31px;top:555px" width="21" height="21" viewBox="0 0 21 21"><rect x="1" y="1" width="13" height="13" fill="#8c8c8c" stroke="#5e5e5e" stroke-width="1"/><rect x="3.5" y="1.5" width="8" height="12" fill="#a9a9a9"/><path d="M2.2 2v11M12.8 2v11" stroke="#555" stroke-width="1.3" stroke-dasharray="1.6 1.4"/><rect x="7" y="7" width="13" height="13" fill="#7e7e7e" stroke="#505050" stroke-width="1"/><rect x="9.5" y="7.5" width="8" height="12" fill="#a2a2a2"/><path d="M8.2 8v11M18.8 8v11" stroke="#484848" stroke-width="1.3" stroke-dasharray="1.6 1.4"/></svg>
</div>
<div id="frame"></div>
</div><!--root-->
</body>
</html>
